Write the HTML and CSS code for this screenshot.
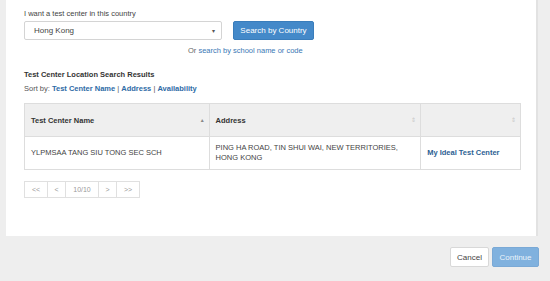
FILE: index.html
```html
<!DOCTYPE html>
<html>
<head>
<meta charset="utf-8">
<link rel="stylesheet" href="styles.css">
</head>
<body>
<div class="page">
  <div class="panel">
    <div class="label">I want a test center in this country</div>
    <div class="search-row">
      <div class="select"><span>Hong Kong</span><span class="caret">&#9662;</span></div>
      <button class="btn-primary">Search by Country</button>
    </div>
    <div class="or-line">Or <a class="link">search by school name or code</a></div>
    <div class="results-title">Test Center Location Search Results</div>
    <div class="sort">Sort by: <a class="slink">Test Center Name</a> | <a class="slink">Address</a> | <a class="slink">Availability</a></div>
    <table class="results">
      <thead>
        <tr>
          <th class="c1">Test Center Name<span class="sort-ic up">&#9650;</span></th>
          <th class="c2">Address<span class="sort-ic">&#8661;</span></th>
          <th class="c3"><span class="sort-ic">&#8661;</span></th>
        </tr>
      </thead>
      <tbody>
        <tr>
          <td>YLPMSAA TANG SIU TONG SEC SCH</td>
          <td>PING HA ROAD, TIN SHUI WAI, NEW TERRITORIES,<br>HONG KONG</td>
          <td><a class="ideal">My Ideal Test Center</a></td>
        </tr>
      </tbody>
    </table>
    <div class="pager">
      <span class="pg w1">&lt;&lt;</span><span class="pg w2">&lt;</span><span class="pg w3">10/10</span><span class="pg w2">&gt;</span><span class="pg w1">&gt;&gt;</span>
    </div>
  </div>
  <div class="footer">
    <button class="btn-cancel">Cancel</button>
    <button class="btn-continue">Continue</button>
  </div>
</div>
</body>
</html>
```
FILE: styles.css
```css
html, body {
  margin: 0;
  padding: 0;
  background: #eeeeee;
  font-family: "Liberation Sans", Arial, sans-serif;
  font-size: 7.5px;
  color: #333;
}
.page {
  width: 550px;
  height: 281px;
  overflow: hidden;
}
.panel {
  margin-left: 6px;
  width: 532px;
  height: 236px;
  background: #fff;
  border-right: 2px solid #e2e2e2;
  box-sizing: border-box;
  padding: 9px 0 0 18px;
}
.label {
  color: #444;
  height: 11px;
  line-height: 10px;
}
.search-row {
  display: flex;
  align-items: center;
  margin-top: 1px;
}
.select {
  width: 198px;
  height: 19px;
  box-sizing: border-box;
  border: 1px solid #d4d4d4;
  border-radius: 2px;
  display: flex;
  align-items: center;
  justify-content: space-between;
  padding: 0 6px 0 9px;
  font-size: 8px;
  color: #444;
}
.caret {
  font-size: 6px;
  color: #555;
}
.btn-primary {
  margin-left: 11px;
  width: 81px;
  height: 19px;
  border: 1px solid #3a7dbb;
  border-radius: 2px;
  background: #4489c9;
  color: #fff;
  font-family: inherit;
  font-size: 8px;
  padding: 0;
}
.or-line {
  margin-top: 5px;
  margin-left: 164px;
  color: #666;
  height: 11px;
  line-height: 11px;
}
.link {
  color: #3a78b5;
}
.results-title {
  margin-top: 14px;
  font-weight: bold;
  color: #333;
  line-height: 10px;
}
.sort {
  margin-top: 4px;
  color: #555;
  line-height: 10px;
}
.slink {
  color: #2e6ba6;
  font-weight: bold;
}
.results {
  margin-top: 9px;
  width: 497px;
  border-collapse: collapse;
  border: 1px solid #dddddd;
}
.results th {
  background: #efefef;
  height: 33px;
  text-align: left;
  font-weight: bold;
  color: #333;
  padding: 0 6px;
  border-left: 1px solid #dddddd;
  position: relative;
  box-sizing: border-box;
}
.results td {
  height: 33px;
  padding: 0 6px;
  border-left: 1px solid #dddddd;
  border-top: 1px solid #dddddd;
  color: #444;
  line-height: 10px;
  box-sizing: border-box;
}
.c1 { width: 185px; }
.c2 { width: 212px; }
.c3 { width: 100px; }
.sort-ic {
  position: absolute;
  right: 4px;
  top: 12px;
  font-size: 6px;
  color: #c8c8c8;
  font-weight: normal;
}
.sort-ic.up {
  color: #888;
  font-size: 5px;
  top: 13px;
}
.ideal {
  color: #2c5f93;
  font-weight: bold;
}
.pager {
  margin-top: 11px;
  display: flex;
  height: 17px;
}
.pg {
  border: 1px solid #e0e0e0;
  margin-left: -1px;
  display: flex;
  align-items: center;
  justify-content: center;
  color: #999;
  font-size: 7px;
  box-sizing: border-box;
  height: 17px;
}
.pg:first-child { margin-left: 0; }
.w1 { width: 24px; }
.w2 { width: 19px; }
.w3 { width: 34px; }
.footer {
  display: flex;
  justify-content: flex-end;
  gap: 3px;
  padding: 11px 11px 0 0;
}
.btn-cancel {
  width: 39px;
  height: 20px;
  border: 1px solid #d8d8d8;
  border-radius: 2px;
  background: #fff;
  color: #444;
  font-family: inherit;
  font-size: 8px;
  padding: 0;
}
.btn-continue {
  width: 47px;
  height: 20px;
  border: 1px solid #7aa9d6;
  border-radius: 2px;
  background: #80b1de;
  color: #eaf3fb;
  font-family: inherit;
  font-size: 8px;
  padding: 0;
}
```
